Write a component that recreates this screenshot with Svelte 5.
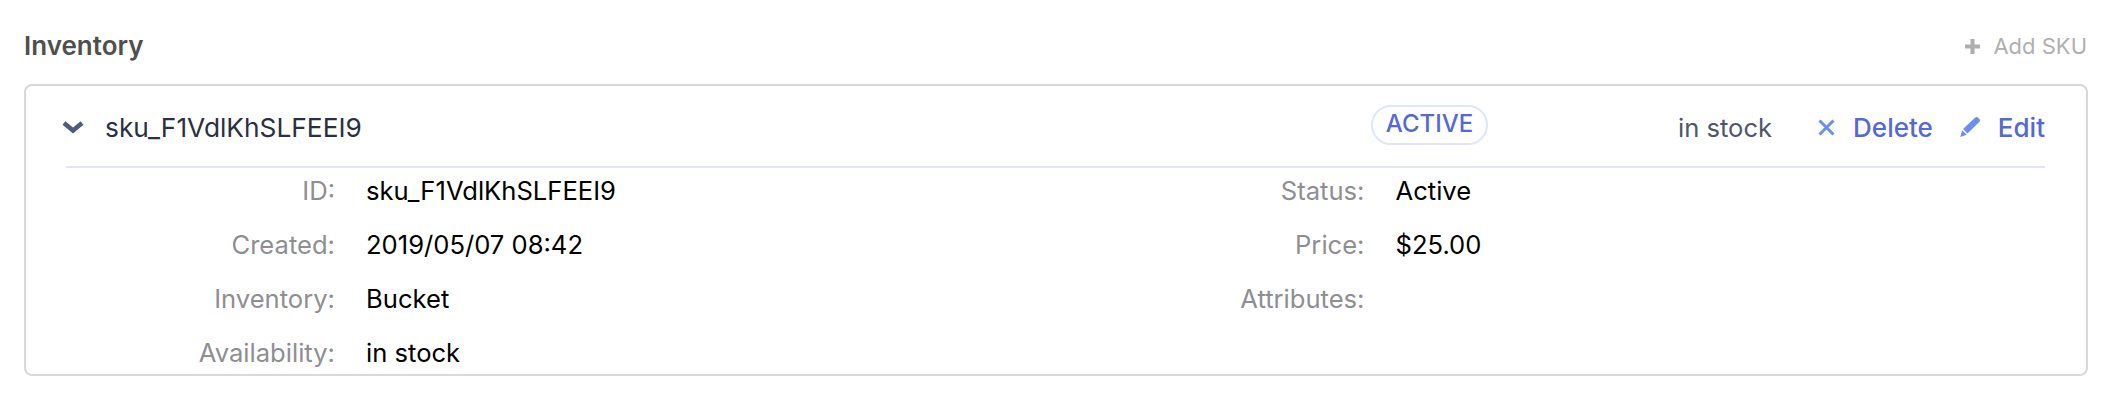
<script>
  const rowsLeft = [
    ["ID:", "sku_F1VdlKhSLFEEI9"],
    ["Created:", "2019/05/07 08:42"],
    ["Inventory:", "Bucket"],
    ["Availability:", "in stock"],
  ];
  const rowsRight = [
    ["Status:", "Active"],
    ["Price:", "$25.00"],
    ["Attributes:", ""],
  ];
</script>

<section class="inventory">
  <header class="section-header">
    <h2>Inventory</h2>
    <button class="add-button">
      <svg class="add-icon" viewBox="0 0 17 17" width="17" height="17">
        <path d="M6.500 1h4v5.500H16v4h-5.500V16h-4v-5.500H1v-4h5.500z" />
      </svg>
      <span>Add SKU</span>
    </button>
  </header>

  <div class="card">
    <div class="card-head">
      <svg class="chevron" viewBox="0 0 22 14" width="22" height="14">
        <path d="M2 3l9 7.500L20 3" />
      </svg>
      <span class="sku-name">sku_F1VdlKhSLFEEI9</span>
      <span class="badge">ACTIVE</span>
      <span class="stock">in stock</span>
      <button class="action delete">
        <svg viewBox="0 0 17 17" width="17" height="17">
          <path class="stroke" d="M1.500 1.500l14 14M15.500 1.500l-14 14" />
        </svg>
        <span>Delete</span>
      </button>
      <button class="action edit">
        <svg viewBox="0 0 20 20" width="20" height="20">
          <path d="M15 .8c1-1 2.300-1 3.200 0l1 1c1 1 1 2.300 0 3.200L7.500 16.500l-4.500-4.500zM2.200 13.200l4.600 4.600L.2 20z" />
        </svg>
        <span>Edit</span>
      </button>
    </div>
    <div class="details">
      <div class="column">
        {#each rowsLeft as [label, value]}
          <div class="row">
            <span class="label">{label}</span>
            <span class="value">{value}</span>
          </div>
        {/each}
      </div>
      <div class="column">
        {#each rowsRight as [label, value]}
          <div class="row">
            <span class="label">{label}</span>
            <span class="value">{value}</span>
          </div>
        {/each}
      </div>
    </div>
  </div>
</section>

<style>
  :global(body) {
    margin: 0;
    background: #fff;
    font-family: Inter, "Liberation Sans", sans-serif;
  }

  .inventory {
    width: 2124px;
    height: 410px;
    box-sizing: border-box;
    padding: 26px 36px 0 24px;
  }

  .section-header {
    display: flex;
    align-items: center;
    justify-content: space-between;
    height: 38px;
    margin-bottom: 20px;
  }

  h2 {
    margin: 0;
    font-size: 26px;
    font-weight: 600;
    color: #4f4f4f;
  }

  .add-button {
    display: flex;
    align-items: center;
    gap: 12px;
    padding: 2px 1px 0 0;
    border: 0;
    background: none;
    font: inherit;
    font-size: 22px;
    color: #b0b0b0;
  }

  .add-icon {
    fill: #aeaeae;
  }

  .card {
    height: 292px;
    box-sizing: border-box;
    border: 2px solid #d9d9d9;
    border-radius: 8px;
    overflow: hidden;
    padding: 0 41px 0 40px;
  }

  .card-head {
    display: flex;
    align-items: center;
    height: 78px;
    padding-top: 2px;
    border-bottom: 2px solid #e3e8ee;
  }

  .chevron {
    margin-left: -4px;
    margin-right: 21px;
    fill: none;
    stroke: #4f5b7c;
    stroke-width: 4.5;
  }

  .sku-name {
    width: 1267px;
    font-size: 26.3px;
    color: #2a2f45;
  }

  .badge {
    width: 117px;
    height: 40px;
    margin-top: -4px;
    margin-left: -1px;
    box-sizing: border-box;
    border: 2px solid #dfe6f9;
    border-radius: 20px;
    font-size: 24px;
    font-weight: 500;
    line-height: 33px;
    text-align: center;
    color: #5469d4;
  }

  .stock {
    margin-left: auto;
    margin-right: 46px;
    font-size: 25.6px;
    color: #4f566b;
  }

  .action {
    display: flex;
    align-items: center;
    gap: 18px;
    padding: 0;
    border: 0;
    background: none;
    font: inherit;
    font-size: 26px;
    font-weight: 500;
    color: #5469d4;
  }

  .action svg {
    fill: #6c8eef;
  }

  .action .stroke {
    fill: none;
    stroke: #6c8eef;
    stroke-width: 3;
  }

  .delete {
    margin-right: 27px;
  }

  .details {
    display: grid;
    grid-template-columns: 1029.5px 1fr;
    margin-top: -1px;
  }

  .column {
    display: flex;
    flex-direction: column;
    gap: 8px;
  }

  .row {
    display: flex;
    align-items: center;
    height: 46px;
    font-size: 25.6px;
  }

  .label {
    width: 269px;
    margin-right: 31px;
    text-align: right;
    color: #8e8e93;
  }

  .value {
    color: #000;
  }
</style>
